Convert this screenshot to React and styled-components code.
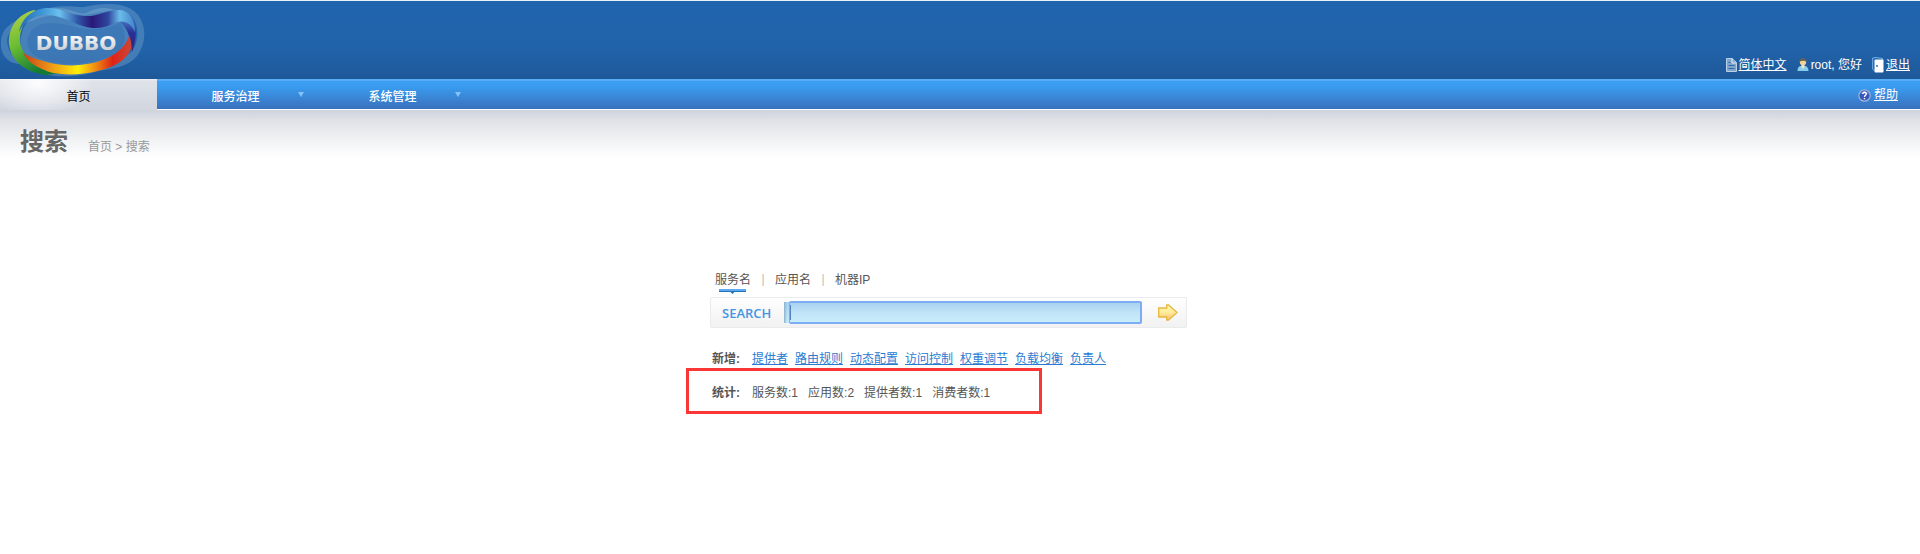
import React from "react";
import styled, { createGlobalStyle } from "styled-components";

const GlobalStyle = createGlobalStyle`
  *, *::before, *::after { box-sizing: border-box; }
  body {
    margin: 0;
    background: #fff;
    color: #555;
    font: 12px/16px "Liberation Sans", Arial, "Noto Sans CJK SC", sans-serif;
  }
  button, input { font: inherit; }
  ul { list-style: none; margin: 0; padding: 0; }
  h1 { margin: 0; }
`;

const Header = styled.header`
  display: flex;
  justify-content: space-between;
  align-items: flex-end;
  height: 79px;
  border-top: 1px solid #e8f0f8;
  background: linear-gradient(#2064ae 0%, #2163aa 60%, #1e5899 100%);
`;

const LogoLink = styled.a`
  display: block;
  height: 78px;
`;

const UserBar = styled.div`
  display: flex;
  align-items: center;
  gap: 10px;
  padding: 0 10px 6px 0;
  color: #fff;
`;

const IconText = styled.span`
  display: flex;
  align-items: center;
  gap: ${(p) => p.$gap || 2}px;
`;

const WhiteLink = styled.a`
  color: #fff;
  text-decoration: underline;
  text-underline-offset: 1px;
`;

const Nav = styled.nav`
  display: flex;
  justify-content: space-between;
  height: 31px;
  background: linear-gradient(#3a9ff4 0, #76bcf8 1px, #3a9ff4 2px, #3a9bee 8px, #3a70bd 30px, #fff 30px);
`;

const Menu = styled.ul`
  display: flex;
`;

const MenuItem = styled.li`
  width: 157px;
`;

const MenuLink = styled.a`
  display: grid;
  grid-template-columns: 1fr auto 1fr;
  align-items: center;
  height: 31px;
  padding-top: 4px;
  text-decoration: none;
  font-weight: ${(p) => (p.$active ? 400 : 500)};
  color: ${(p) => (p.$active ? "#000" : "#fff")};
  background: ${(p) =>
    p.$active
      ? "radial-gradient(ellipse 56px 34px at 38px 4px, #fcfcfd, transparent), linear-gradient(#eef0f3 0, #dfe3e9 2px, #d1d6df 100%)"
      : "none"};
  span { grid-column: 2; }
  svg { grid-column: 3; justify-self: end; margin: 0 10px 4px 0; }
`;

const Help = styled.div`
  display: flex;
  align-items: center;
  padding: 1px 22px 0 0;
`;

const Page = styled.main`
  padding: 19px 20px 40px;
  background: linear-gradient(#ced3dc 0, #dee1e6 10px, #eceef0 25px, #fff 48px);
`;

const TitleRow = styled.div`
  display: flex;
  align-items: flex-end;
  gap: 20px;
`;

const Title = styled.h1`
  font-size: 24px;
  line-height: 26px;
  color: #666;
`;

const Crumbs = styled.div`
  color: #999;
  a { color: inherit; text-decoration: none; }
`;

const SearchArea = styled.section`
  width: 477px;
  margin: 116px auto 0;
`;

const Centered = styled.div`
  padding-right: 23px;
`;

const Tabs = styled.div`
  display: flex;
  align-items: flex-start;
  padding-left: 5px;
  height: 26px;
`;

const Tab = styled.button`
  position: relative;
  display: block;
  height: 24px;
  padding: 1px 0 7px;
  border: 0;
  background: none;
  color: #555;
  cursor: pointer;
  svg { position: absolute; left: 4px; bottom: 1px; }
`;

const Divider = styled.span`
  width: 24px;
  text-align: center;
  color: #bbb;
`;

const SearchForm = styled.form`
  display: flex;
  align-items: center;
  height: 31px;
  border: 1px solid #ebebee;
  border-radius: 2px;
  background: linear-gradient(#fff, #f1f1f2);
`;

const SearchLabel = styled.label`
  width: 73px;
  padding-left: 11px;
  font: 600 13px/16px "Open Sans", sans-serif;
  color: #4396e4;
`;

const Field = styled.div`
  flex: 1;
  height: 21px;
  padding-left: 5px;
  background: linear-gradient(90deg, #8ab4d0, transparent 3px), linear-gradient(#a6d1ef, #c9ebfa);
`;

const Input = styled.input`
  display: block;
  width: 100%;
  height: 23px;
  margin-top: -1px;
  padding: 0 4px;
  border: 2px solid #7cacf3;
  border-left-width: 1px;
  border-radius: 2px;
  outline: 0;
  background: linear-gradient(90deg, #5483c0 1px, transparent 1px) 0 2px / 100% 15px no-repeat, linear-gradient(#a9d2ef, #c0e4f8 50%, #caedfb);
  color: #333;
`;

const Submit = styled.button`
  display: grid;
  place-items: center;
  width: 44px;
  height: 29px;
  padding: 0 0 0 8px;
  border: 0;
  background: none;
  cursor: pointer;
`;

const InfoRow = styled.div`
  position: relative;
  display: flex;
  margin-top: ${(p) => p.$top}px;
  padding-left: 2px;
  line-height: 16px;
`;

const RowLabel = styled.strong`
  width: 40px;
  font-weight: 700;
`;

const LinkList = styled.div`
  display: flex;
  gap: ${(p) => p.$gap}px;
  a { color: #2a7bd1; text-underline-offset: 1px; }
`;

const Highlight = styled.div`
  position: absolute;
  top: -17px;
  left: -24px;
  width: 356px;
  height: 46px;
  border: 3px solid #fb3636;
  pointer-events: none;
`;

const Logo = () => (
  <svg width="148" height="78" viewBox="0 0 148 78" role="img" aria-label="DUBBO">
    <defs>
      <linearGradient id="top" x1="20" x2="136" y1="0" y2="0" gradientUnits="userSpaceOnUse">
        <stop offset="0" stopColor="#2a6db8" />
        <stop offset=".18" stopColor="#3c94d4" />
        <stop offset=".34" stopColor="#6cc0ec" />
        <stop offset=".5" stopColor="#2f55a6" />
        <stop offset=".62" stopColor="#2a1878" />
        <stop offset=".76" stopColor="#2f479f" />
        <stop offset=".86" stopColor="#6bbcea" />
        <stop offset="1" stopColor="#3f7fc6" />
      </linearGradient>
      <linearGradient id="left" x1="10" x2="40" y1="10" y2="70" gradientUnits="userSpaceOnUse">
        <stop offset="0" stopColor="#b4d34c" />
        <stop offset=".5" stopColor="#6cbd33" />
        <stop offset="1" stopColor="#127a35" />
      </linearGradient>
      <linearGradient id="bottom" x1="24" x2="132" y1="0" y2="0" gradientUnits="userSpaceOnUse">
        <stop offset="0" stopColor="#c8431a" />
        <stop offset=".25" stopColor="#ed9915" />
        <stop offset=".5" stopColor="#ffee08" />
        <stop offset=".66" stopColor="#ef8c13" />
        <stop offset=".82" stopColor="#df2416" />
        <stop offset="1" stopColor="#c9483a" />
      </linearGradient>
      <linearGradient id="right" x1="0" x2="0" y1="12" y2="52" gradientUnits="userSpaceOnUse">
        <stop offset="0" stopColor="#55a1dd" />
        <stop offset=".5" stopColor="#292f94" />
        <stop offset="1" stopColor="#35207d" />
      </linearGradient>
      <linearGradient id="word" x1="0" x2="0" y1="33" y2="50" gradientUnits="userSpaceOnUse">
        <stop offset="0" stopColor="#fff" />
        <stop offset="1" stopColor="#c8cdd3" />
      </linearGradient>
    </defs>
    <path fillRule="evenodd" d="M1 40C2 24 18 18 34 12C56 2 72 6 84 6C104 2 126 0 138 14C148 28 145 44 137 55C128 66 112 68 98 70C76 78 38 78 21 63C8 63 0 54 1 40ZM7 40C8 52 14 57 24 56C36 69 74 71 94 63C116 62 130 56 135 45C140 32 137 20 130 14C116 6 98 12 84 14C64 12 44 14 32 20C18 24 8 28 7 40Z" fill="#86b3d4" opacity=".35" />
    <path d="M22 32C26 14 50 4 66 8C76 10 80 14 86 12C104 2 122 8 126 22C134 42 124 58 105 64C81 72 50 72 31 61C20 53 18 43 22 32Z" fill="#8ab8d8" opacity=".36" />
    <path d="M30 32C36 20 56 20 74 26C94 30 108 28 120 22C130 38 124 52 104 58C78 66 44 64 32 52C26 46 26 38 30 32Z" fill="#1e61aa" opacity=".25" />
    <path d="M34 9C16 14 8 28 9 43C11 60 26 72 46 74L62 72L50 67C32 63 22 53 20 42C19 30 24 18 36 10Z" fill="url(#left)" />
    <path d="M23 52C42 62 66 67 87 63C112 59 127 47 130 31C135 44 131 53 120 61C105 71 76 76 53 72C39 68 28 62 23 52Z" fill="url(#bottom)" />
    <path d="M122 9C137 15 139 32 132 51C132 36 126 24 116 18Z" fill="url(#right)" />
    <path d="M19 31C22 16 34 7 48 7C62 7 70 14 84 15C98 16 108 8 120 9C130 11 135 19 135 31C131 22 125 19 117 21C106 27 95 29 83 25C70 21 60 14 47 14C34 14 25 20 19 31Z" fill="url(#top)" />
    <text x="76" y="49" textAnchor="middle" fontFamily="'DejaVu Sans', sans-serif" fontWeight="700" fontSize="20" fill="url(#word)">DUBBO</text>
  </svg>
);

const DocIcon = () => (
  <svg width="11" height="14" viewBox="0 0 11 14" aria-hidden="true">
    <path d="M.5.5H6L10.500 4.500V13.500H.5Z" fill="#7fa5cf" stroke="#b9d1e8" />
    <path d="M6 .5V5H10" fill="none" stroke="#e2edf8" />
    <path d="M2.500 4.500H4.500M2.500 7.500H8.500M2.500 10.500H8.500" fill="none" stroke="#3268a6" />
  </svg>
);

const UserIcon = () => (
  <svg width="12" height="14" viewBox="0 0 12 14" aria-hidden="true">
    <path d="M.5 13C.5 9 2.500 8 4 8H8C10 8 11.500 10 11.500 13Z" fill="#86cceb" />
    <path d="M4.500 6H7.500V9L6 11L4.500 9Z" fill="#f3e6c4" />
    <circle cx="6" cy="4" r="3.200" fill="#efd59c" />
    <path d="M2.600 4C2 .5 5 .4 6 .5C9 .5 10 2 9.300 4.500L8 2.700L4 3Z" fill="#655e50" />
  </svg>
);

const DoorIcon = () => (
  <svg width="12" height="16" viewBox="0 0 12 16" aria-hidden="true">
    <path d="M2.500 14L.7 12V1L4 .6L10.500 1.500V3" fill="none" stroke="#72b6ef" />
    <rect x="2.500" y="2.500" width="9" height="13" rx="1" fill="#fff" />
    <path d="M4 9H6M5 8V10" stroke="#277bc5" />
  </svg>
);

const HelpIcon = () => (
  <svg width="13" height="13" viewBox="0 0 13 13" aria-hidden="true">
    <circle cx="6.500" cy="6.500" r="5.700" fill="#3857b9" stroke="#9fb3dc" strokeWidth="1.200" />
    <path d="M2 5C4 1 9 1 11 5Z" fill="#7593da" opacity=".6" />
    <path d="M4.700 5C4.700 2.600 8.500 2.800 8.300 5C8.200 6.300 6.500 6.300 6.500 8M6.500 9V10.300" fill="none" stroke="#fff" strokeWidth="1.400" />
  </svg>
);

const DownIcon = () => (
  <svg width="6" height="5" viewBox="0 0 6 5" aria-hidden="true">
    <path d="M0 0H6L3 5Z" fill="#82c4fc" />
  </svg>
);

const ArrowIcon = () => (
  <svg width="20" height="17" viewBox="0 0 20 17" aria-hidden="true">
    <defs>
      <linearGradient id="gold" x1="0" x2="0" y1="0" y2="1">
        <stop offset="0" stopColor="#fff9b0" />
        <stop offset=".5" stopColor="#ffec9a" />
        <stop offset="1" stopColor="#ffbd72" />
      </linearGradient>
    </defs>
    <path d="M.7 4H8.700V1H10.500L19 8.500L10.500 16H8.700V13H.7Z" fill="url(#gold)" stroke="#e3b842" strokeWidth="1.300" />
  </svg>
);

const Marker = () => (
  <svg width="27" height="5" viewBox="0 0 27 5" aria-hidden="true">
    <path d="M0 0H27V2H0Z" fill="#5eaaf0" />
    <path d="M0 2H27V3H15.500L13.500 5L11.500 3H0Z" fill="#2373b8" />
  </svg>
);

const menus = ["服务治理", "系统管理"];
const tabs = ["服务名", "应用名", "机器IP"];
const addLinks = ["提供者", "路由规则", "动态配置", "访问控制", "权重调节", "负载均衡", "负责人"];
const stats = [["服务数", 1], ["应用数", 2], ["提供者数", 1], ["消费者数", 1]];

export default function App() {
  return (
    <>
      <GlobalStyle />
      <Header>
        <LogoLink href="#"><Logo /></LogoLink>
        <UserBar>
          <IconText><DocIcon /><WhiteLink href="#">简体中文</WhiteLink></IconText>
          <IconText><UserIcon /><span>root, 您好</span></IconText>
          <IconText><DoorIcon /><WhiteLink href="#">退出</WhiteLink></IconText>
        </UserBar>
      </Header>
      <Nav>
        <Menu>
          <MenuItem><MenuLink href="#" $active><span>首页</span></MenuLink></MenuItem>
          {menus.map((name) => (
            <MenuItem key={name}>
              <MenuLink href="#"><span>{name}</span><DownIcon /></MenuLink>
            </MenuItem>
          ))}
        </Menu>
        <Help>
          <IconText $gap={3}><HelpIcon /><WhiteLink href="#">帮助</WhiteLink></IconText>
        </Help>
      </Nav>
      <Page>
        <TitleRow>
          <Title>搜索</Title>
          <Crumbs><a href="#">首页</a> &gt; 搜索</Crumbs>
        </TitleRow>
        <Centered>
          <SearchArea>
            <Tabs>
              {tabs.map((name, i) => (
                <React.Fragment key={name}>
                  {i > 0 && <Divider>|</Divider>}
                  <Tab type="button">{name}{i === 0 && <Marker />}</Tab>
                </React.Fragment>
              ))}
            </Tabs>
            <SearchForm onSubmit={(e) => e.preventDefault()}>
              <SearchLabel htmlFor="keyword">SEARCH</SearchLabel>
              <Field><Input id="keyword" type="text" /></Field>
              <Submit type="submit" aria-label="SEARCH"><ArrowIcon /></Submit>
            </SearchForm>
            <InfoRow $top={23}>
              <RowLabel>新增:</RowLabel>
              <LinkList $gap={7}>{addLinks.map((name) => <a href="#" key={name}>{name}</a>)}</LinkList>
            </InfoRow>
            <InfoRow $top={18}>
              <RowLabel>统计:</RowLabel>
              <LinkList $gap={10}>{stats.map(([name, count]) => <span key={name}>{name}:{count}</span>)}</LinkList>
              <Highlight />
            </InfoRow>
          </SearchArea>
        </Centered>
      </Page>
    </>
  );
}
